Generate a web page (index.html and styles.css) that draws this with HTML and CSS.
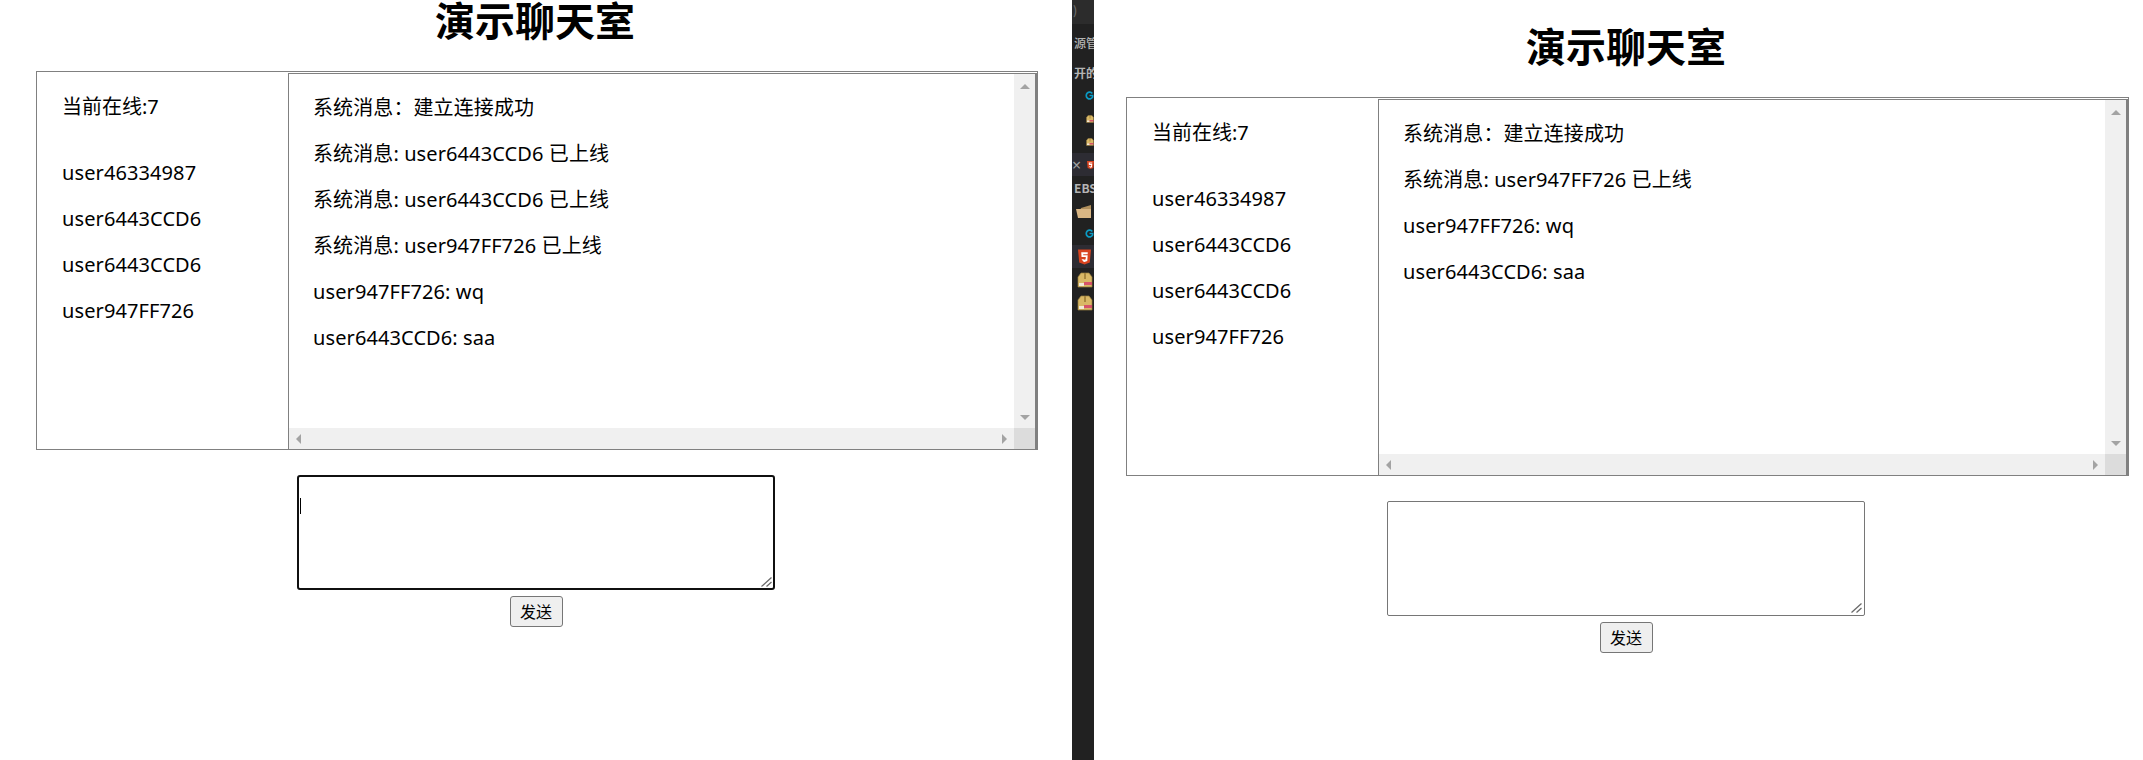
FILE: index.html
```html
<!DOCTYPE html>
<html lang="zh-CN">
<head>
    <meta charset="UTF-8">
    <title>演示聊天室</title>
    <link rel="stylesheet" href="styles.css">
</head>
<body>
    <svg class="defs" width="0" height="0">
        <symbol id="ico-go" viewBox="0 0 16 16">
            <path d="M13 4.500A6 6 0 1 0 13.500 11V8H8" fill="none" stroke="#0a9ac4" stroke-width="3"/>
        </symbol>
        <symbol id="ico-box" viewBox="0 0 16 16">
            <path d="M1 5 4 1h8l3 4v10H1z" fill="#d9b866" stroke="#9a7f3f" stroke-width=".7"/>
            <path d="M7 1h2v6H7z" fill="#a8873f"/>
            <path d="M2 11h5v3H2z" fill="#f2ead6"/>
            <path d="M7 10h8v3H7z" fill="#d6336c" opacity=".75"/>
        </symbol>
        <symbol id="ico-html" viewBox="0 0 14 16">
            <path d="M0 0h14l-1.300 14L7 16l-5.700-2z" fill="#d8431f"/>
            <path d="M10.500 3h-7l.3 5h4.600l-.2 2.500L7 11l-1.200-.5h-2L6 13l1 .3 3-1 .4-6.300H5.700L5.600 5h4.800z" fill="#fff"/>
        </symbol>
        <symbol id="ico-folder" viewBox="0 0 16 14">
            <path d="M5 4 15 1v11H2z" fill="#b08f5c"/>
            <path d="M0 5h15v9H2z" fill="#d9b684"/>
        </symbol>
        <symbol id="ico-grip" viewBox="0 0 11 10">
            <path d="M.5 9.500 10.500.5M5.500 9.500l5-4.500" fill="none" stroke="#6b6b6b" stroke-width="1.300"/>
        </symbol>
    </svg>

    <main class="pane pane-first">
        <h1 class="title">演示聊天室</h1>
        <div class="chat">
            <div class="online">
                <div class="online-count">当前在线:7</div>
                <div class="row">user46334987</div>
                <div class="row">user6443CCD6</div>
                <div class="row">user6443CCD6</div>
                <div class="row">user947FF726</div>
            </div>
            <div class="messages">
                <div class="messages-body">
                    <div class="row">系统消息：建立连接成功</div>
                    <div class="row">系统消息: user6443CCD6 已上线</div>
                    <div class="row">系统消息: user6443CCD6 已上线</div>
                    <div class="row">系统消息: user947FF726 已上线</div>
                    <div class="row">user947FF726: wq</div>
                    <div class="row">user6443CCD6: saa</div>
                </div>
                <div class="bar-v"><i class="arrow arrow-up"></i><i class="arrow arrow-down"></i></div>
                <div class="bar-h"><i class="arrow arrow-left"></i><i class="arrow arrow-right"></i></div>
                <div class="corner"></div>
            </div>
        </div>
        <div class="send">
            <div class="input-wrap">
                <textarea class="input input-focus"></textarea>
                <span class="caret"></span>
                <svg class="grip" width="11" height="10"><use href="#ico-grip"/></svg>
            </div>
            <button class="send-btn">发送</button>
        </div>
    </main>

    <aside class="strip">
        <div class="strip-top">)</div>
        <div class="strip-head">源管</div>
        <div class="strip-row strip-label">开的</div>
        <div class="strip-row go"><svg width="13" height="13"><use href="#ico-go"/></svg></div>
        <div class="strip-row box-far"><svg width="16" height="16"><use href="#ico-box"/></svg></div>
        <div class="strip-row box-far"><svg width="16" height="16"><use href="#ico-box"/></svg></div>
        <div class="strip-row strip-active"><span class="close">×</span><svg width="14" height="16"><use href="#ico-html"/></svg></div>
        <div class="strip-row strip-label">EBS</div>
        <div class="strip-row folder"><svg width="16" height="14"><use href="#ico-folder"/></svg></div>
        <div class="strip-row go"><svg width="13" height="13"><use href="#ico-go"/></svg></div>
        <div class="strip-row strip-active html-near"><svg width="13" height="16"><use href="#ico-html"/></svg></div>
        <div class="strip-row box-near"><svg width="16" height="16"><use href="#ico-box"/></svg></div>
        <div class="strip-row box-near"><svg width="16" height="16"><use href="#ico-box"/></svg></div>
    </aside>

    <main class="pane pane-second">
        <h1 class="title">演示聊天室</h1>
        <div class="chat">
            <div class="online">
                <div class="online-count">当前在线:7</div>
                <div class="row">user46334987</div>
                <div class="row">user6443CCD6</div>
                <div class="row">user6443CCD6</div>
                <div class="row">user947FF726</div>
            </div>
            <div class="messages">
                <div class="messages-body">
                    <div class="row">系统消息：建立连接成功</div>
                    <div class="row">系统消息: user947FF726 已上线</div>
                    <div class="row">user947FF726: wq</div>
                    <div class="row">user6443CCD6: saa</div>
                </div>
                <div class="bar-v"><i class="arrow arrow-up"></i><i class="arrow arrow-down"></i></div>
                <div class="bar-h"><i class="arrow arrow-left"></i><i class="arrow arrow-right"></i></div>
                <div class="corner"></div>
            </div>
        </div>
        <div class="send">
            <div class="input-wrap">
                <textarea class="input"></textarea>
                <svg class="grip" width="11" height="10"><use href="#ico-grip"/></svg>
            </div>
            <button class="send-btn">发送</button>
        </div>
    </main>
</body>
</html>
```

FILE: styles.css
```css
html, body {
    margin: 0;
    padding: 0;
    height: 760px;
    overflow: hidden;
}
body {
    display: flex;
    width: 2143px;
    background-color: #fff;
    color: #000;
    font-family: "Noto Sans", "Noto Sans CJK SC", sans-serif;
    font-size: 20px;
}
.defs {
    position: absolute;
}
.pane {
    flex: none;
    display: flex;
    flex-direction: column;
    align-items: center;
}
.pane-first {
    width: 1072px;
}
.pane-second {
    width: 1064px;
    padding-top: 26px;
}
.title {
    margin: 0 0 27px;
    height: 44px;
    font-size: 40px;
    line-height: 39px;
    font-weight: 700;
    font-family: "Noto Sans CJK SC", sans-serif;
}
.pane-first .title {
    margin-right: 2px;
}
.chat {
    box-sizing: border-box;
    display: flex;
    align-self: flex-start;
    height: 379px;
    border: 1px solid #808080;
}
.pane-first .chat {
    width: 1002px;
    margin-left: 36px;
}
.pane-second .chat {
    width: 1003px;
    margin-left: 32px;
}
.online {
    box-sizing: border-box;
    flex: none;
    width: 251px;
    padding: 12px 0 0 25px;
}
.online-count {
    height: 46px;
    line-height: 46px;
    margin-bottom: 20px;
}
.row {
    height: 46px;
    line-height: 46px;
    letter-spacing: 0.1px;
    white-space: nowrap;
}
.messages {
    flex: 1;
    display: grid;
    grid-template-columns: 1fr 21px;
    grid-template-rows: 1fr 21px;
    margin-top: 1px;
    border: 1px solid #808080;
    border-bottom: 0;
    border-right-width: 2px;
}
.messages-body {
    padding: 11px 0 0 24px;
}
.bar-v, .bar-h {
    display: flex;
    justify-content: space-between;
    align-items: center;
    background-color: #f0f0f0;
}
.bar-v {
    flex-direction: column;
    padding: 10px 0 8px;
}
.bar-h {
    padding: 0 7px;
}
.corner {
    background-color: #dcdcdc;
}
.arrow {
    width: 0;
    height: 0;
    border-style: solid;
    border-color: transparent;
}
.bar-v .arrow {
    border-width: 5px;
}
.bar-h .arrow {
    border-width: 5px;
}
.arrow-up {
    border-top: 0;
    border-bottom-color: #a3a3a3;
}
.arrow-down {
    border-bottom: 0;
    border-top-color: #a3a3a3;
}
.arrow-left {
    border-left: 0;
    border-right-color: #a3a3a3;
}
.arrow-right {
    border-right: 0;
    border-left-color: #a3a3a3;
}
.send {
    display: flex;
    flex-direction: column;
    align-items: center;
    margin-top: 25px;
}
.input-wrap {
    position: relative;
    height: 115px;
}
.input {
    box-sizing: border-box;
    display: block;
    width: 478px;
    height: 115px;
    margin: 0;
    padding: 2px;
    border: 1px solid #767676;
    border-radius: 2px;
    background-color: #fff;
    outline: none;
    resize: none;
}
.input-focus {
    border: 2px solid #101010;
    border-radius: 3px;
}
.caret {
    position: absolute;
    left: 3px;
    top: 23px;
    width: 1px;
    height: 16px;
    background-color: #000;
}
.grip {
    position: absolute;
    right: 3px;
    bottom: 3px;
}
.send-btn {
    box-sizing: border-box;
    width: 53px;
    height: 31px;
    margin-top: 6px;
    padding: 0;
    border: 1px solid #767676;
    border-radius: 3px;
    background-color: #efefef;
    color: #000;
    font-family: "Noto Sans CJK SC", sans-serif;
    font-size: 16px;
    line-height: 29px;
}
.strip {
    flex: none;
    width: 22px;
    height: 760px;
    overflow: hidden;
    background-color: #212121;
    color: #b4b4b4;
    font-family: "Noto Sans CJK SC", sans-serif;
    font-size: 12px;
    font-weight: 500;
}
.strip-top {
    box-sizing: border-box;
    height: 24px;
    padding-left: 1px;
    background-color: #2c2c2c;
    color: #6e6e6e;
    line-height: 20px;
}
.strip-head {
    height: 37px;
    padding-left: 2px;
    line-height: 37px;
    white-space: nowrap;
}
.strip-row {
    display: flex;
    align-items: center;
    height: 23px;
    white-space: nowrap;
}
.strip-label {
    padding-left: 2px;
    font-weight: 700;
}
.strip-active {
    background-color: #2d2c33;
}
.go {
    padding-left: 13px;
}
.box-far {
    padding-left: 14px;
}
.box-near {
    padding-left: 5px;
}
.folder {
    padding-left: 4px;
}
.html-near {
    padding-left: 6px;
}
.close {
    flex: none;
    width: 15px;
    color: #a0a0a0;
    font-family: "Noto Sans", sans-serif;
    font-size: 16px;
    font-weight: 400;
}
```
